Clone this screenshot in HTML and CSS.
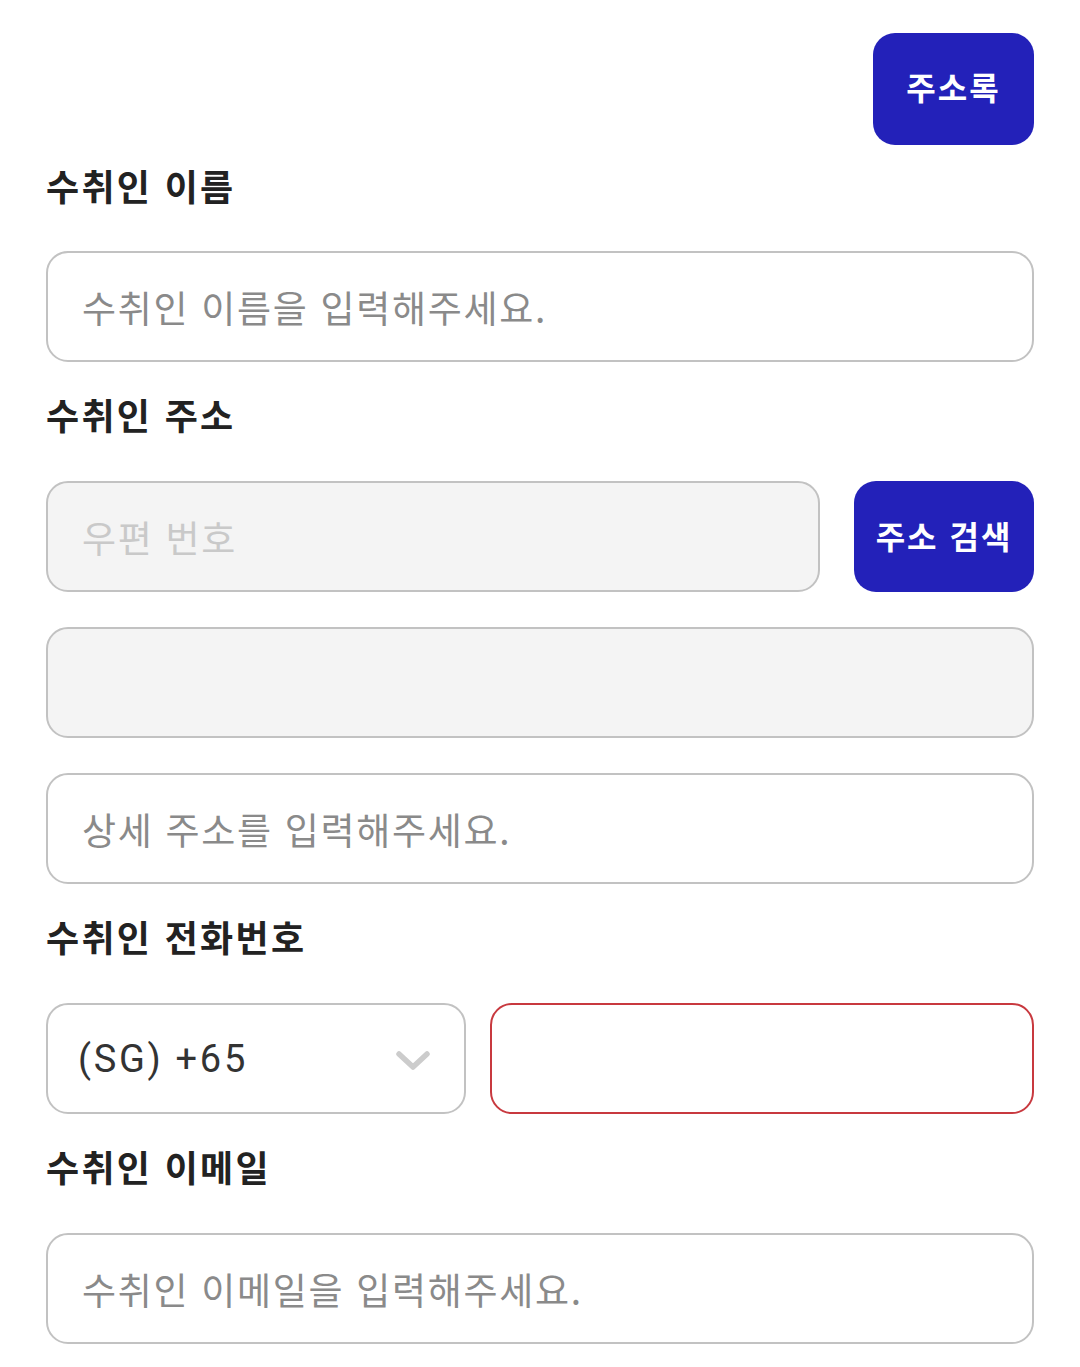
FILE: index.html
```html
<!DOCTYPE html>
<html lang="ko">
<head>
<meta charset="utf-8">
<title>수취인 정보</title>
<link rel="stylesheet" href="styles.css">
</head>
<body>
<main class="form">
  <div class="top-row">
    <button class="btn btn-book" type="button">주소록</button>
  </div>

  <label class="label label-first">수취인 이름</label>
  <input class="field" type="text" placeholder="수취인 이름을 입력해주세요.">

  <label class="label">수취인 주소</label>
  <div class="row-zip">
    <input class="field field-disabled zip" type="text" placeholder="우편 번호" readonly>
    <button class="btn btn-search" type="button">주소 검색</button>
  </div>
  <input class="field field-disabled stack" type="text" readonly>
  <input class="field stack" type="text" placeholder="상세 주소를 입력해주세요.">

  <label class="label">수취인 전화번호</label>
  <div class="row-phone">
    <div class="select">
      <span class="select-text">(SG) +65</span>
      <svg class="chevron" width="34" height="22" viewBox="0 0 34 22"><path d="M3 4 L17 17 L31 4" fill="none" stroke="#cccccc" stroke-width="5.5" stroke-linecap="round" stroke-linejoin="round"/></svg>
    </div>
    <input class="field field-error" type="tel">
  </div>

  <label class="label">수취인 이메일</label>
  <input class="field" type="email" placeholder="수취인 이메일을 입력해주세요.">
</main>
</body>
</html>
```

FILE: styles.css
```css
* { box-sizing: border-box; }

html, body {
  margin: 0;
  padding: 0;
  background: #ffffff;
}

body {
  font-family: "Noto Sans CJK KR", "Noto Sans", sans-serif;
  color: #222222;
}

.form {
  display: flex;
  flex-direction: column;
  padding: 33px 46px 0 46px;
}

.top-row {
  display: flex;
  justify-content: flex-end;
}

.btn {
  border: none;
  background: #2321b9;
  color: #ffffff;
  font-family: "Noto Sans CJK KR", sans-serif;
  font-weight: 700;
  font-size: 32px;
  letter-spacing: 2px;
  border-radius: 22px;
  height: 112px;
  padding: 0;
  display: flex;
  align-items: center;
  justify-content: center;
}

.btn-book {
  width: 161px;
  padding-bottom: 6px;
}

.btn-search {
  width: 180px;
  flex: 0 0 180px;
  height: 111px;
  padding-bottom: 4px;
}

.label {
  display: block;
  height: 50px;
  line-height: 50px;
  font-size: 36px;
  font-weight: 700;
  letter-spacing: 2.3px;
  color: #222222;
  margin: 27px 0 42px 0;
}

.label-first {
  margin-top: 15px;
  margin-bottom: 41px;
}

.field {
  display: block;
  width: 100%;
  height: 111px;
  border: 2px solid #c2c2c2;
  border-radius: 22px;
  background: #ffffff;
  padding: 0 34px;
  font-family: "Noto Sans CJK KR", sans-serif;
  font-size: 37px;
  letter-spacing: 1.7px;
  color: #222222;
  outline: none;
}

.field::placeholder {
  color: #8a8a8a;
}

.field-disabled {
  background: #f4f4f4;
}

.field-disabled::placeholder {
  color: #c9c9c9;
}

.row-zip {
  display: flex;
  gap: 34px;
}

.zip {
  flex: 1 1 auto;
  width: auto;
}

.stack {
  margin-top: 35px;
}

.row-phone {
  display: flex;
  gap: 24px;
}

.select {
  flex: 0 0 420px;
  height: 111px;
  border: 2px solid #c2c2c2;
  border-radius: 22px;
  display: flex;
  align-items: center;
  justify-content: space-between;
  padding: 0 34px 0 30px;
}

.select-text {
  font-family: Roboto, "Noto Sans", sans-serif;
  font-size: 38px;
  letter-spacing: 2.7px;
  color: #333333;
}

.chevron {
  display: block;
  margin-top: 4px;
}

.field-error {
  flex: 1 1 auto;
  width: auto;
  border-color: #c8393f;
}
```
